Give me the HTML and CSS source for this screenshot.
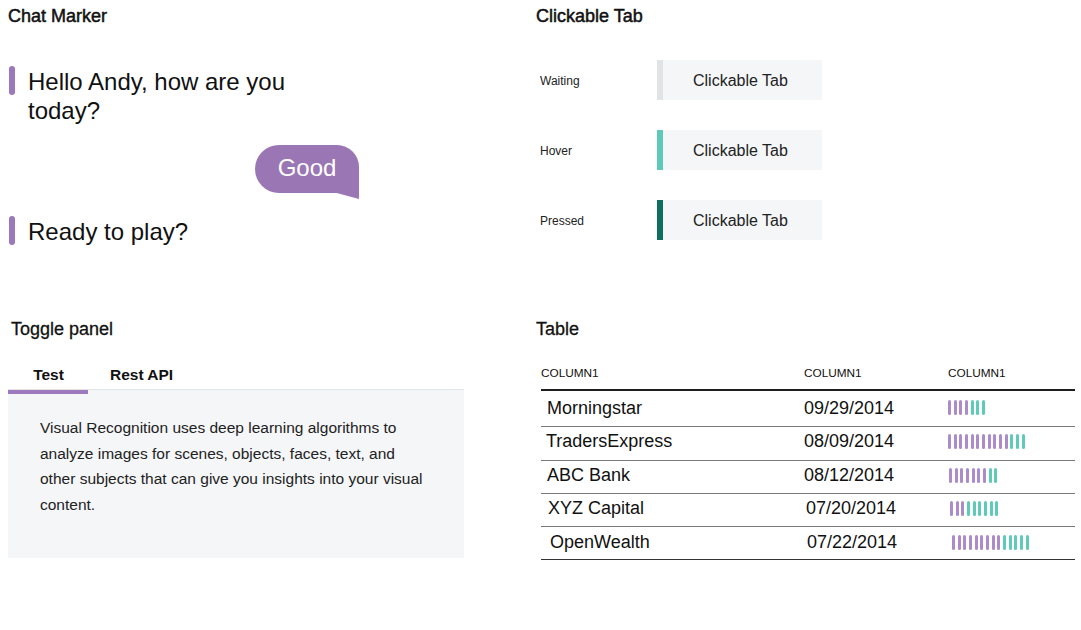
FILE: index.html
```html
<!DOCTYPE html>
<html lang="en">
<head>
<meta charset="utf-8">
<title>Components</title>
<link rel="stylesheet" href="styles.css">
</head>
<body>
<div class="page">
  <section class="chat">
    <h2 class="title title-strong">Chat Marker</h2>
    <div class="msg first">
      <span class="marker"></span>
      <p class="msg-text">Hello Andy, how are you today?</p>
    </div>
    <div class="reply-row">
      <div class="bubble">Good</div>
    </div>
    <div class="msg second">
      <span class="marker"></span>
      <p class="msg-text">Ready to play?</p>
    </div>
  </section>

  <section class="ctabs">
    <h2 class="title title-strong">Clickable Tab</h2>
    <div class="ctab-list">
      <div class="ctab-row">
        <span class="ctab-label">Waiting</span>
        <div class="ctab waiting">Clickable Tab</div>
      </div>
      <div class="ctab-row">
        <span class="ctab-label">Hover</span>
        <div class="ctab hover">Clickable Tab</div>
      </div>
      <div class="ctab-row">
        <span class="ctab-label">Pressed</span>
        <div class="ctab pressed">Clickable Tab</div>
      </div>
    </div>
  </section>

  <section class="toggle">
    <h2 class="title">Toggle panel</h2>
    <div class="tabbar">
      <div class="tab active">Test</div>
      <div class="tab">Rest API</div>
    </div>
    <div class="panel">
      <p>Visual Recognition uses deep learning algorithms to analyze images for scenes, objects, faces, text, and other subjects that can give you insights into your visual content.</p>
    </div>
  </section>

  <section class="table-sec">
    <h2 class="title">Table</h2>
    <div class="table">
      <div class="thead">
        <span>COLUMN1</span><span>COLUMN1</span><span>COLUMN1</span>
      </div>
      <div class="trow r1">
        <span class="c-name">Morningstar</span>
        <span class="c-date">09/29/2014</span>
        <span class="bars"><i class="p"></i><i class="p"></i><i class="p"></i><i class="p"></i><i class="t"></i><i class="t"></i><i class="t"></i></span>
      </div>
      <div class="trow r2">
        <span class="c-name nudge-left">TradersExpress</span>
        <span class="c-date">08/09/2014</span>
        <span class="bars"><i class="p"></i><i class="p"></i><i class="p"></i><i class="p"></i><i class="p"></i><i class="p"></i><i class="p"></i><i class="p"></i><i class="p"></i><i class="p"></i><i class="p"></i><i class="t"></i><i class="t"></i><i class="t"></i></span>
      </div>
      <div class="trow shift-1">
        <span class="c-name">ABC Bank</span>
        <span class="c-date">08/12/2014</span>
        <span class="bars"><i class="p"></i><i class="p"></i><i class="p"></i><i class="p"></i><i class="p"></i><i class="p"></i><i class="p"></i><i class="t"></i><i class="t"></i></span>
      </div>
      <div class="trow shift-2">
        <span class="c-name">XYZ Capital</span>
        <span class="c-date">07/20/2014</span>
        <span class="bars"><i class="p"></i><i class="p"></i><i class="p"></i><i class="t"></i><i class="t"></i><i class="t"></i><i class="t"></i><i class="t"></i><i class="t"></i></span>
      </div>
      <div class="trow shift-3 last">
        <span class="c-name">OpenWealth</span>
        <span class="c-date">07/22/2014</span>
        <span class="bars"><i class="p"></i><i class="p"></i><i class="p"></i><i class="p"></i><i class="p"></i><i class="p"></i><i class="p"></i><i class="p"></i><i class="p"></i><i class="t"></i><i class="t"></i><i class="t"></i><i class="t"></i><i class="t"></i></span>
      </div>
    </div>
  </section>
</div>
</body>
</html>
```

FILE: styles.css
```css
* { box-sizing: border-box; }

html, body {
  margin: 0;
  padding: 0;
  background: #ffffff;
}

body {
  font-family: "Liberation Sans", Arial, Helvetica, sans-serif;
  color: #111111;
  width: 1081px;
  height: 630px;
  overflow: hidden;
}

.page {
  display: grid;
  grid-template-columns: 528px 545px;
  grid-template-rows: 313px auto;
  padding-left: 8px;
}

.title {
  margin: 0;
  padding-top: 6px;
  font-size: 18px;
  line-height: 20px;
  font-weight: normal;
  -webkit-text-stroke: 0.3px #111;
  color: #111;
}

.title-strong {
  -webkit-text-stroke: 0.5px #111;
}

/* Chat marker */
.chat {
  width: 351px;
  display: flex;
  flex-direction: column;
}

.msg {
  display: flex;
  align-items: flex-start;
  gap: 13px;
  padding-left: 1px;
}

.msg.first { margin-top: 40px; }
.msg.second { margin-top: 17px; }

.marker {
  flex: 0 0 6px;
  width: 6px;
  height: 29px;
  border-radius: 3px;
  background: #9b78b8;
}

.msg-text {
  margin: 0;
  font-size: 24px;
  line-height: 29px;
  max-width: 300px;
  color: #111;
  padding-top: 1px;
}

.reply-row {
  display: flex;
  justify-content: flex-end;
  margin-top: 20px;
}

.bubble {
  position: relative;
  width: 104px;
  height: 48px;
  border-radius: 24px 22px 0 24px;
  background: #9b76b5;
  color: #ffffff;
  font-size: 24px;
  line-height: 46px;
  text-align: center;
  margin-bottom: 6px;
}

.bubble::after {
  content: "";
  position: absolute;
  right: 0;
  bottom: -6px;
  width: 26px;
  height: 7px;
  background: #9b76b5;
  clip-path: polygon(0 0, 100% 0, 100% 100%);
}

/* Clickable tabs */
.ctab-list {
  display: flex;
  flex-direction: column;
  gap: 30px;
  margin-top: 34px;
}

.ctab-row {
  display: flex;
  align-items: center;
}

.ctab-label {
  width: 121px;
  padding-left: 4px;
  padding-top: 1px;
  font-size: 12px;
  color: #222;
}

.ctab {
  width: 165px;
  height: 40px;
  background: #f5f6f8;
  border-left: 6px solid #e2e3e5;
  padding-left: 30px;
  padding-top: 2px;
  font-size: 16px;
  line-height: 38px;
  color: #222;
}

.ctab.hover { border-left-color: #5fc9b9; }
.ctab.pressed { border-left-color: #0f6f5f; }

/* Toggle panel */
.toggle {
  width: 456px;
}

.toggle .title { padding-left: 3px; }

.tabbar {
  display: flex;
  margin-top: 18px;
  border-bottom: 1px solid #e3e4e6;
}

.tab {
  position: relative;
  font-size: 15.5px;
  font-weight: bold;
  line-height: 18px;
  padding: 9px 0 5px;
  height: 32px;
  color: #111;
}

.tab.active {
  width: 80px;
  padding-left: 1px;
  text-align: center;
}

.tab.active::after {
  content: "";
  position: absolute;
  left: 0;
  right: 0;
  bottom: -5px;
  height: 4px;
  background: #9d7abd;
}

.tab + .tab {
  padding-left: 22px;
}

.panel {
  background: #f5f6f8;
  height: 168px;
  padding: 25px 39px 0 32px;
}

.panel p {
  margin: 0;
  font-size: 15.5px;
  line-height: 25.7px;
  color: #222;
}

/* Table */
.table {
  width: 534px;
  margin-left: 5px;
  margin-top: 27px;
}

.thead,
.trow {
  display: grid;
  grid-template-columns: 263px 144px 1fr;
  align-items: center;
}

.thead {
  font-size: 11.8px;
  line-height: 14px;
  padding-bottom: 9px;
  border-bottom: 2px solid #1e1e1e;
  color: #111;
}

.trow {
  height: 33px;
  border-bottom: 1px solid #7a7a7a;
  font-size: 18px;
  line-height: 20px;
  padding-bottom: 4px;
}

.trow.r1 {
  height: 36px;
  padding-bottom: 2px;
}

.trow.r2 {
  height: 34px;
  padding-bottom: 5px;
}

.trow.last {
  border-bottom-color: #333;
  padding-bottom: 2px;
}

.c-name { padding-left: 6px; }
.nudge-left { padding-left: 5px; }

.shift-1 .bars { padding-left: 1px; }
.shift-2 .c-name { padding-left: 7px; }
.shift-2 .c-date { padding-left: 2px; }
.shift-2 .bars { padding-left: 2px; }
.shift-3 .c-name { padding-left: 9px; }
.shift-3 .c-date { padding-left: 3px; }
.shift-3 .bars { padding-left: 4px; }

.bars {
  display: flex;
  gap: 2.67px;
  align-items: center;
}

.bars i {
  display: block;
  width: 3px;
  height: 15px;
  border-radius: 1.5px;
}

.bars .p { background: #ab8bc9; }
.bars .t { background: #5ecab8; }
```
